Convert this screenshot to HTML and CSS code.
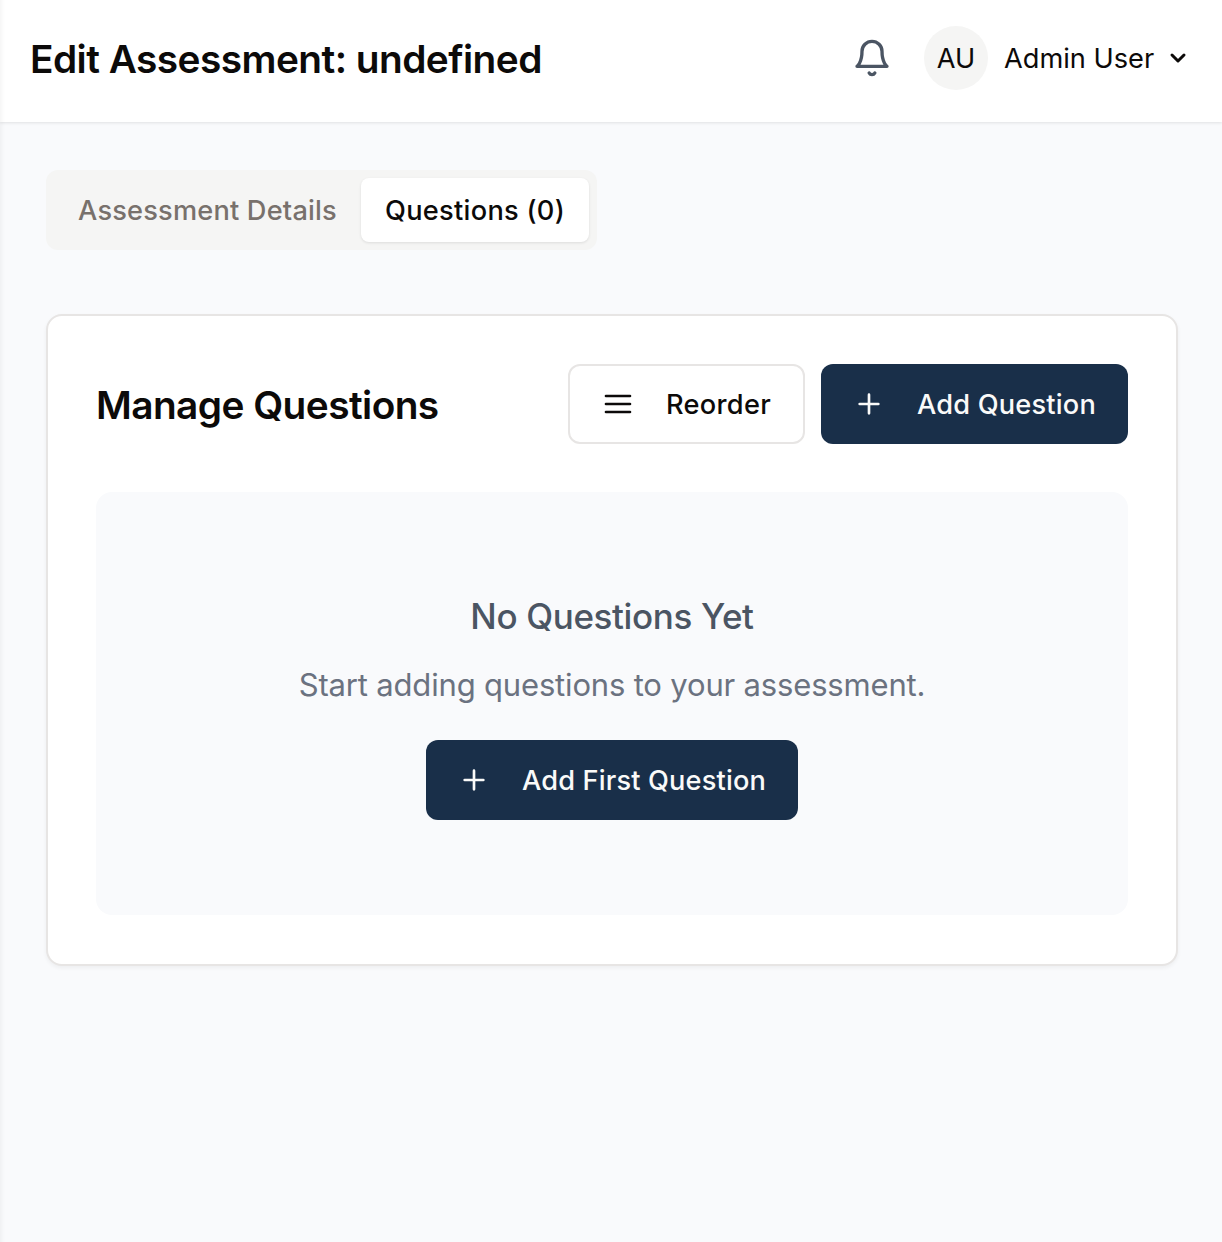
FILE: index.html
```html
<!DOCTYPE html>
<html lang="en">
<head>
<meta charset="utf-8">
<title>Edit Assessment</title>
<link rel="stylesheet" href="styles.css">
</head>
<body>
<header class="header">
  <h1 class="page-title">Edit Assessment: undefined</h1>
  <div class="account">
    <svg class="bell" viewBox="0 0 24 24"><path d="M6 8a6 6 0 0 1 12 0c0 7 3 9 3 9H3s3-2 3-9"/><path d="M10.3 21a1.94 1.94 0 0 0 3.4 0"/></svg>
    <div class="avatar">AU</div>
    <span class="user-name">Admin User</span>
    <svg class="chevron" viewBox="0 0 24 24"><path d="m6 9 6 6 6-6"/></svg>
  </div>
</header>
<main class="content">
  <nav class="tabs">
    <button class="tab tab-details">Assessment Details</button>
    <button class="tab tab-active">Questions (0)</button>
  </nav>
  <section class="card">
    <div class="card-header">
      <h2 class="card-title">Manage Questions</h2>
      <div class="actions">
        <button class="btn btn-outline"><svg class="icon" viewBox="0 0 24 24"><path d="M3 6h18M3 12h18M3 18h18"/></svg>Reorder</button>
        <button class="btn btn-primary btn-add"><svg class="icon" viewBox="0 0 24 24"><path d="M5 12h14M12 5v14"/></svg>Add Question</button>
      </div>
    </div>
    <div class="empty">
      <h3 class="empty-title">No Questions Yet</h3>
      <p class="empty-text">Start adding questions to your assessment.</p>
      <button class="btn btn-primary btn-first"><svg class="icon" viewBox="0 0 24 24"><path d="M5 12h14M12 5v14"/></svg>Add First Question</button>
    </div>
  </section>
</main>
</body>
</html>
```
FILE: styles.css
```css
* { box-sizing: border-box; }
body {
  margin: 0;
  min-height: 1242px;
  background: #f9fafc;
  color: #0c0a09;
  font-family: Inter, "Liberation Sans", sans-serif;
  box-shadow: inset 5px 0 5px -4px rgba(0, 0, 0, 0.06);
}
h1, h2, h3, p { margin: 0; }
svg { fill: none; stroke: currentColor; stroke-width: 2; stroke-linecap: round; stroke-linejoin: round; flex: none; }
button { font: inherit; border: 0; white-space: nowrap; }

.header {
  display: flex;
  align-items: center;
  justify-content: space-between;
  height: 122px;
  padding: 0 32px 6px 30px;
  background: #fff;
  box-shadow: 0 1px 3px rgba(0, 0, 0, 0.1), inset 5px 0 5px -4px rgba(0, 0, 0, 0.06);
}
.page-title { padding-top: 2px; font-size: 38.8px; font-weight: 600; line-height: 56px; letter-spacing: -0.54px; }
.account { display: flex; align-items: center; }
.bell { width: 40px; height: 40px; margin-right: 32px; color: #4b5563; }
.avatar {
  display: grid;
  place-items: center;
  width: 64px;
  height: 64px;
  margin-right: 16px;
  border-radius: 50%;
  background: #f5f5f4;
  font-size: 27.2px;
}
.user-name { font-size: 27.2px; width: 150px; white-space: nowrap; }
.chevron { width: 24px; height: 24px; margin-left: 12px; stroke-width: 3; }

.content { padding: 48px 44px 0 46px; }
.tabs {
  display: flex;
  width: 551px;
  height: 80px;
  padding: 8px;
  border-radius: 12px;
  background: #f5f5f4;
}
.tab {
  height: 64px;
  padding: 0 24px;
  border-radius: 8px;
  background: transparent;
  color: #78716c;
  font-size: 27.2px;
  font-weight: 500;
  letter-spacing: 0.19px;
}
.tab-details { width: 307px; }
.tab-active { width: 228px; background: #fff; color: #0c0a09; box-shadow: 0 1px 3px rgba(0, 0, 0, 0.1); letter-spacing: 0.28px; }

.card {
  height: 652px;
  margin-top: 64px;
  padding: 48px;
  border: 2px solid #e7e5e4;
  border-radius: 16px;
  background: #fff;
  box-shadow: 0 2px 4px rgba(0, 0, 0, 0.05);
}
.card-header { display: flex; align-items: center; justify-content: space-between; height: 80px; }
.card-title { font-size: 38.8px; font-weight: 600; letter-spacing: -0.56px; }
.actions { display: flex; gap: 16px; }
.btn {
  display: flex;
  align-items: center;
  gap: 32px;
  height: 80px;
  padding: 0 0 0 32px;
  border-radius: 12px;
  font-size: 27.2px;
  font-weight: 500;
  letter-spacing: 0.19px;
}
.icon { width: 32px; height: 32px; }
.btn-outline { width: 237px; border: 2px solid #e7e5e4; background: #fff; color: #0c0a09; letter-spacing: 0.3px; }
.btn-primary { background: #192f49; color: #fafaf9; }
.btn-add { width: 307px; }

.empty {
  display: flex;
  flex-direction: column;
  align-items: center;
  height: 423px;
  margin-top: 48px;
  padding-top: 96px;
  border-radius: 16px;
  background: #f9fafc;
}
.empty-title { color: #4b5563; font-size: 35px; font-weight: 500; line-height: 56px; letter-spacing: -0.37px; }
.empty-text { padding-top: 1px; margin-top: 16px; color: #6b7280; font-size: 31px; line-height: 48px; letter-spacing: -0.17px; }
.btn-first { width: 372px; margin-top: 31px; letter-spacing: 0.16px; }
```
